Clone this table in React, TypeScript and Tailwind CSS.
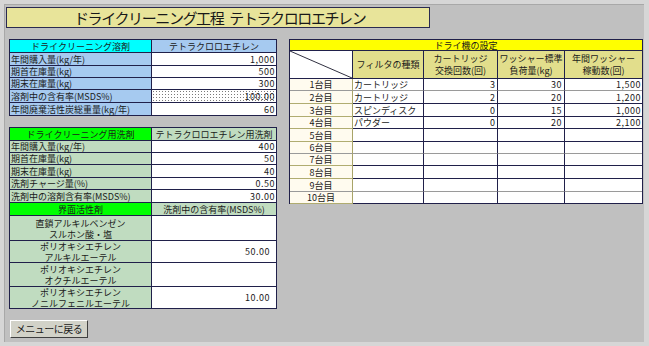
import React from 'react';

const font = { fontFamily: '"Noto Sans CJK JP", "Noto Sans", sans-serif' };

type Row = { label: string; value: string; h: number; dotted?: boolean };

const solvent: Row[] = [
  { label: '年間購入量(kg/年)', value: '1,000', h: 13 },
  { label: '期首在庫量(kg)', value: '500', h: 12 },
  { label: '期末在庫量(kg)', value: '300', h: 12 },
  { label: '溶剤中の含有率(MSDS%)', value: '100.00', h: 13, dotted: true },
  { label: '年間廃棄活性炭総重量(kg/年)', value: '60', h: 13 },
];

const detergent: Row[] = [
  { label: '年間購入量(kg/年)', value: '400', h: 12 },
  { label: '期首在庫量(kg)', value: '50', h: 12 },
  { label: '期末在庫量(kg)', value: '40', h: 13 },
  { label: '洗剤チャージ量(%)', value: '0.50', h: 12 },
  { label: '洗剤中の溶剤含有率(MSDS%)', value: '30.00', h: 13 },
];

const surfactants = [
  { l1: '直鎖アルキルベンゼン', l2: 'スルホン酸・塩', value: '', h: 25 },
  { l1: 'ポリオキシエチレン', l2: 'アルキルエーテル', value: '50.00', h: 22 },
  { l1: 'ポリオキシエチレン', l2: 'オクチルエーテル', value: '', h: 24 },
  { l1: 'ポリオキシエチレン', l2: 'ノニルフェニルエーテル', value: '10.00', h: 22 },
];

const machines = [
  { name: '1台目', filter: 'カートリッジ', a: '3', b: '30', c: '1,500', h: 12, gray: true },
  { name: '2台目', filter: 'カートリッジ', a: '2', b: '20', c: '1,200', h: 13 },
  { name: '3台目', filter: 'スピンディスク', a: '0', b: '15', c: '1,000', h: 13 },
  { name: '4台目', filter: 'パウダー', a: '0', b: '20', c: '2,100', h: 12 },
  { name: '5台目', filter: '', a: '', b: '', c: '', h: 13 },
  { name: '6台目', filter: '', a: '', b: '', c: '', h: 12, gray: true },
  { name: '7台目', filter: '', a: '', b: '', c: '', h: 12 },
  { name: '8台目', filter: '', a: '', b: '', c: '', h: 13 },
  { name: '9台目', filter: '', a: '', b: '', c: '', h: 13, gray: true },
  { name: '10台目', filter: '', a: '', b: '', c: '', h: 12 },
];

function SettingsRow({ row, labelBg }: { row: Row; labelBg: string }) {
  return (
    <div className="flex" style={{ height: row.h }}>
      <div className={`w-[142px] shrink-0 border-r border-b border-[#20204a] px-[1px] flex items-center leading-none whitespace-nowrap ${labelBg}`}>
        {row.label}
      </div>
      <div
        className={`flex-1 border-b border-[#20204a] px-[1px] flex items-center justify-end leading-none tracking-[0.5px] whitespace-nowrap ${
          row.dotted
            ? 'bg-white bg-[radial-gradient(circle,#7a7a7a_0.7px,transparent_0.9px)] bg-size-[3px_3px]'
            : 'bg-white'
        }`}
      >
        {row.value}
      </div>
    </div>
  );
}

export default function App() {
  return (
    <div className="w-[649px] h-[346px] bg-[#d6d6d6] pt-[4px] pl-[4px] text-[9px] text-[#1a1a1a]" style={font}>
      <div className="w-[640px] h-[338px] bg-[#c0c0c0] border-t border-l border-[#a8a8a8]">
        {/* title */}
        <div className="ml-[1px] mt-[2px] w-[424px] h-[21px] bg-[#e8e49a] border border-[#2a2a50] flex items-center pl-[67px] text-[15px] leading-none tracking-[-1.4px] whitespace-nowrap text-[#181818]">
          <span>ドライクリーニング工程</span>
          <span className="ml-[6px]">テトラクロロエチレン</span>
        </div>

        <div className="flex mt-[11px] ml-[4px] gap-[12px] items-start">
          {/* left column */}
          <div className="flex flex-col w-[268px]">
            <div className="border-l border-t border-r border-[#20204a]">
              <div className="flex h-[13px]">
                <div className="w-[142px] shrink-0 bg-[#00ffff] border-r border-b border-[#20204a] flex items-center justify-center leading-none whitespace-nowrap">
                  ドライクリーニング溶剤
                </div>
                <div className="flex-1 bg-[#a6caf0] border-b border-[#20204a] flex items-center justify-center leading-none whitespace-nowrap">
                  テトラクロロエチレン
                </div>
              </div>
              {solvent.map((r) => (
                <SettingsRow key={r.label} row={r} labelBg="bg-[#a6caf0]" />
              ))}
            </div>

            <div className="mt-[11px] border-l border-t border-r border-[#20204a]">
              <div className="flex h-[13px]">
                <div className="w-[142px] shrink-0 bg-[#00ff00] border-r border-b border-[#20204a] flex items-center justify-center leading-none whitespace-nowrap">
                  ドライクリーニング用洗剤
                </div>
                <div className="flex-1 bg-[#c0dcc0] border-b border-[#20204a] flex items-center justify-center leading-none whitespace-nowrap">
                  テトラクロロエチレン用洗剤
                </div>
              </div>
              {detergent.map((r) => (
                <SettingsRow key={r.label} row={r} labelBg="bg-[#c0dcc0]" />
              ))}
              <div className="flex h-[13px]">
                <div className="w-[142px] shrink-0 bg-[#00ff00] border-r border-b border-[#20204a] flex items-center justify-center leading-none whitespace-nowrap">
                  界面活性剤
                </div>
                <div className="flex-1 bg-[#c0dcc0] border-b border-[#20204a] flex items-center justify-center leading-none whitespace-nowrap">
                  洗剤中の含有率(MSDS%)
                </div>
              </div>
              {surfactants.map((s) => (
                <div key={s.l2} className="flex" style={{ height: s.h }}>
                  <div className="w-[142px] shrink-0 bg-[#c0dcc0] border-r border-b border-[#20204a] flex flex-col items-center justify-center whitespace-nowrap">
                    <span className="block leading-[11px] h-[10px]">{s.l1}</span>
                    <span className="block leading-[11px] h-[10px] mt-[1px]">{s.l2}</span>
                  </div>
                  <div className="flex-1 bg-white border-b border-[#20204a] flex items-center justify-end pr-[6px] leading-none tracking-[0.5px]">
                    {s.value}
                  </div>
                </div>
              ))}
            </div>

            <button className="mt-[11px] ml-[1px] w-[78px] h-[18px] bg-[#d2d2c8] border border-t-white border-l-white border-b-[#404040] border-r-[#404040] text-[10px] leading-none tracking-[-0.5px] whitespace-nowrap text-[#202020] flex items-center justify-center">
              メニューに戻る
            </button>
          </div>

          {/* right table */}
          <div className="w-[354px] border-l border-t border-r border-[#20204a]">
            <div className="h-[11px] bg-[#ffff00] border-b border-[#20204a] flex items-center justify-center leading-none">
              ドライ機の設定
            </div>
            <div className="flex h-[28px]">
              <div className="w-[63px] shrink-0 bg-white border-r border-b border-[#20204a] relative">
                <svg className="absolute inset-0" width="62" height="27" viewBox="0 0 62 27">
                  <line x1="0" y1="0" x2="62" y2="27" stroke="#303040" strokeWidth="1" />
                </svg>
              </div>
              <div className="w-[71px] shrink-0 bg-[#e2de8c] border-r border-b border-[#20204a] flex items-center justify-center leading-none whitespace-nowrap">
                フィルタの種類
              </div>
              <div className="w-[74px] shrink-0 bg-[#e2de8c] border-r border-b border-[#20204a] flex flex-col items-center justify-center leading-[12px] whitespace-nowrap">
                <span>カートリッジ</span>
                <span>交換回数(回)</span>
              </div>
              <div className="w-[67px] shrink-0 bg-[#e2de8c] border-r border-b border-[#20204a] flex flex-col items-center justify-center leading-[12px] whitespace-nowrap">
                <span>ワッシャー標準</span>
                <span>負荷量(kg)</span>
              </div>
              <div className="flex-1 bg-[#e2de8c] border-b border-[#20204a] flex flex-col items-center justify-center leading-[12px] whitespace-nowrap">
                <span>年間ワッシャー</span>
                <span>稼動数(回)</span>
              </div>
            </div>
            {machines.map((m) => {
              const line = m.gray ? 'border-b-[#9a9a9a]' : 'border-b-[#20204a]';
              return (
                <div key={m.name} className="flex" style={{ height: m.h }}>
                  <div className={`w-[63px] shrink-0 bg-[#fffbef] border-r border-b border-r-[#a8a468] ${m.gray ? 'border-b-[#9a9a9a]' : 'border-b-[#b0ac70]'} flex items-center justify-center leading-none whitespace-nowrap`}>
                    {m.name}
                  </div>
                  <div className={`w-[71px] shrink-0 bg-white border-r border-b border-r-[#20204a] ${line} flex items-center px-[1px] leading-none whitespace-nowrap`}>
                    {m.filter}
                  </div>
                  <div className={`w-[74px] shrink-0 bg-white border-r border-b border-r-[#20204a] ${line} flex items-center justify-end px-[2px] leading-none`}>
                    {m.a}
                  </div>
                  <div className={`w-[67px] shrink-0 bg-white border-r border-b border-r-[#20204a] ${line} flex items-center justify-end px-[2px] leading-none tracking-[0.5px]`}>
                    {m.b}
                  </div>
                  <div className={`flex-1 bg-white border-b ${line} flex items-center justify-end px-[1px] leading-none tracking-[0.5px]`}>
                    {m.c}
                  </div>
                </div>
              );
            })}
          </div>
        </div>
      </div>
    </div>
  );
}
